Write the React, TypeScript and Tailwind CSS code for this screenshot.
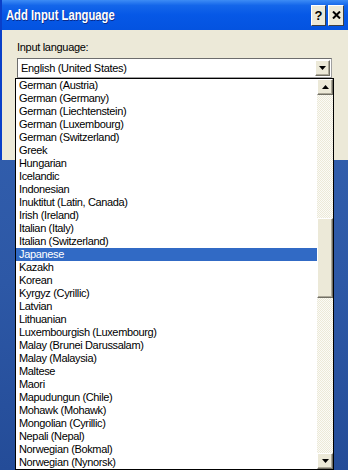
const languages = [
  'German (Austria)',
  'German (Germany)',
  'German (Liechtenstein)',
  'German (Luxembourg)',
  'German (Switzerland)',
  'Greek',
  'Hungarian',
  'Icelandic',
  'Indonesian',
  'Inuktitut (Latin, Canada)',
  'Irish (Ireland)',
  'Italian (Italy)',
  'Italian (Switzerland)',
  'Japanese',
  'Kazakh',
  'Korean',
  'Kyrgyz (Cyrillic)',
  'Latvian',
  'Lithuanian',
  'Luxembourgish (Luxembourg)',
  'Malay (Brunei Darussalam)',
  'Malay (Malaysia)',
  'Maltese',
  'Maori',
  'Mapudungun (Chile)',
  'Mohawk (Mohawk)',
  'Mongolian (Cyrillic)',
  'Nepali (Nepal)',
  'Norwegian (Bokmal)',
  'Norwegian (Nynorsk)',
]

function Arrow({ up }: { up?: boolean }) {
  return (
    <svg width="7" height="4" viewBox="0 0 7 4">
      {up ? <path d="M3.5 0 L7 4 L0 4 Z" fill="#000" /> : <path d="M0 0 L7 0 L3.5 4 Z" fill="#000" />}
    </svg>
  )
}

function ScrollButton({ up, className }: { up?: boolean; className?: string }) {
  return (
    <div
      className={
        'flex items-center justify-center bg-[#ece9d8] border border-t-white border-l-white border-r-[#716f64] border-b-[#716f64] shadow-[inset_-1px_-1px_0_#aca899] ' +
        (className ?? '')
      }
    >
      <Arrow up={up} />
    </div>
  )
}

export default function App() {
  return (
    <div
      className="relative w-[348px] h-[470px] overflow-hidden bg-[linear-gradient(180deg,#3563b2_0%,#2d58a6_60%,#244c98_100%)]"
      style={{ fontFamily: '"Liberation Sans", Arial, sans-serif' }}
    >
      {/* dialog window */}
      <div className="h-[160px] flex flex-col border-l-2 border-[#0a3fc8]">
        {/* title bar */}
        <div className="h-[30px] flex items-center justify-between pl-[4px] pr-[4px] bg-[linear-gradient(180deg,#3d8cf5_0%,#1466ea_18%,#0658e6_50%,#0453e0_100%)]">
          <span className="inline-block origin-left scale-x-[0.75] whitespace-nowrap text-white font-bold text-[15px] [text-shadow:1px_1px_0_#0a2a8a]">
            Add Input Language
          </span>
          <div className="flex gap-[2px]">
            <div className="w-[15px] h-[21px] flex items-center justify-center bg-[#ece9d8] border border-t-white border-l-white border-r-[#404040] border-b-[#404040] text-black font-bold text-[13px] leading-none">
              ?
            </div>
            <div className="w-[16px] h-[21px] flex items-center justify-center bg-[#ece9d8] border border-t-white border-l-white border-r-[#404040] border-b-[#404040]">
              <svg width="9" height="8" viewBox="0 0 9 8">
                <path d="M1 0.5 L8 7.5 M8 0.5 L1 7.5" stroke="#000" strokeWidth="2" />
              </svg>
            </div>
          </div>
        </div>

        {/* body */}
        <div className="flex-1 bg-[#ece9d8] pl-[15px] pr-[16px] pt-[11px]">
          <div className="text-[11px] leading-[13px] tracking-[-0.3px] text-black">Input language:</div>
          <div className="mt-[4px] h-[20px] flex items-center bg-white border border-t-[#6d6d6d] border-l-[#6d6d6d] border-r-[#a0a0a0] border-b-[#a0a0a0]">
            <span className="flex-1 pl-[3px] text-[11px] leading-[13px] tracking-[-0.3px] text-black">
              English (United States)
            </span>
            <ScrollButton className="w-[15px] h-[16px] mr-[1px]" />
          </div>
        </div>
      </div>

      {/* dropped list, lies over the dialog */}
      <div className="absolute left-[15px] top-[78px] w-[319px] h-[392px] flex bg-white border border-black">
        <div className="flex-1 flex flex-col">
          {languages.map((lang) => (
            <div
              key={lang}
              className={
                'h-[13px] pl-[3px] text-[11px] leading-[13px] tracking-[-0.35px] whitespace-nowrap ' +
                (lang === 'Japanese' ? 'bg-[#316ac5] text-white' : 'text-black')
              }
            >
              {lang}
            </div>
          ))}
        </div>
        <div className="w-[16px] flex flex-col">
          <ScrollButton up className="h-[16px]" />
          <div className="flex-1 flex flex-col bg-[repeating-conic-gradient(#fbfbf7_0_25%,#ece9d8_0_50%)] bg-[length:2px_2px]">
            <div className="h-[123px]" />
            <div className="h-[80px] bg-[#ece9d8] border border-t-white border-l-white border-r-[#716f64] border-b-[#716f64] shadow-[inset_-1px_-1px_0_#aca899]" />
          </div>
          <ScrollButton className="h-[16px]" />
        </div>
      </div>
    </div>
  )
}
